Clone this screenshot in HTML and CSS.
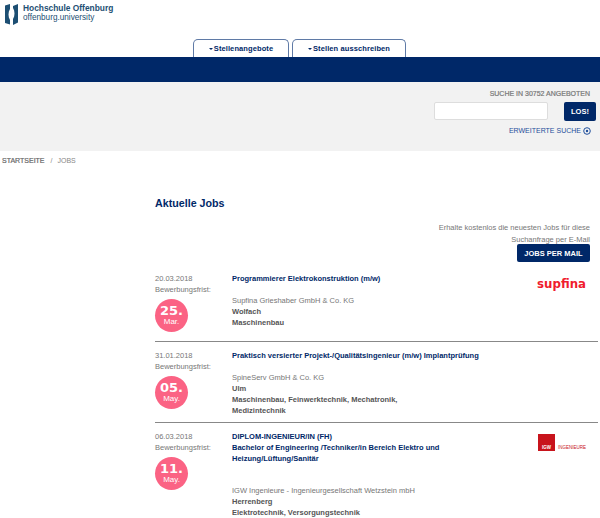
FILE: index.html
```html
<!DOCTYPE html>
<html lang="de">
<head>
<meta charset="utf-8">
<title>Jobs</title>
<link rel="stylesheet" href="styles.css">
</head>
<body>
<header class="top">
  <svg class="logo-mark" width="13" height="22" viewBox="0 0 13 22"><path fill="#1d4f73" d="M0 2.500 5 1V21.500L0 20ZM13 1V19.500L8 22V3Z"/><path fill="#fff" d="M5 6C3 9 3 14 5 17ZM8 5C10 8 10 13 8 16Z"/></svg>
  <div class="logo-text"><strong>Hochschule Offenburg</strong><span>offenburg.university</span></div>
</header>
<nav class="tabs">
  <a class="tab tab-a"><i class="caret"></i>Stellenangebote</a>
  <a class="tab tab-b"><i class="caret"></i>Stellen ausschreiben</a>
</nav>
<div class="band"></div>
<section class="search">
  <div class="search-title">SUCHE IN 30752 ANGEBOTEN</div>
  <div class="search-row"><input class="search-input" type="text"><button class="btn-los">LOS!</button></div>
  <a class="search-more">ERWEITERTE SUCHE <svg width="8" height="8" viewBox="0 0 8 8"><circle cx="4" cy="4" r="3.3" fill="none" stroke="#1f4f9c" stroke-width="1"/><circle cx="4" cy="4" r="1.200" fill="#1f4f9c"/></svg></a>
</section>
<div class="crumbs"><b>STARTSEITE</b><span class="sep">/</span><span>JOBS</span></div>
<main class="content">
  <h1>Aktuelle Jobs</h1>
  <div class="mail">
    <p>Erhalte kostenlos die neuesten Jobs für diese<br>Suchanfrage per E-Mail</p>
    <button class="btn-mail">JOBS PER MAIL</button>
  </div>
  <article class="job job-1">
    <div class="when">
      <div>20.03.2018</div><div>Bewerbungsfrist:</div>
      <div class="badge"><b>25.</b><span>Mar.</span></div>
    </div>
    <div class="info">
      <a class="title">Programmierer Elektrokonstruktion (m/w)</a>
      <div class="company">Supfina Grieshaber GmbH &amp; Co. KG</div>
      <div class="meta">Wolfach</div>
      <div class="meta">Maschinenbau</div>
    </div>
    <div class="brand"><span class="supfina">supfina</span></div>
  </article>
  <article class="job job-2">
    <div class="when">
      <div>31.01.2018</div><div>Bewerbungsfrist:</div>
      <div class="badge"><b>05.</b><span>May.</span></div>
    </div>
    <div class="info">
      <a class="title">Praktisch versierter Projekt-/Qualitätsingenieur (m/w) Implantprüfung</a>
      <div class="company">SpineServ GmbH &amp; Co. KG</div>
      <div class="meta">Ulm</div>
      <div class="meta">Maschinenbau, Feinwerktechnik, Mechatronik,<br>Medizintechnik</div>
    </div>
    <div class="brand"></div>
  </article>
  <article class="job job-3">
    <div class="when">
      <div>06.03.2018</div><div>Bewerbungsfrist:</div>
      <div class="badge"><b>11.</b><span>May.</span></div>
    </div>
    <div class="info">
      <a class="title">DIPLOM-INGENIEUR/IN (FH)<br>Bachelor of Engineering /Techniker/in Bereich Elektro und<br>Heizung/Lüftung/Sanitär</a>
      <div class="company tall">IGW Ingenieure - Ingenieurgesellschaft Wetzstein mbH</div>
      <div class="meta">Herrenberg</div>
      <div class="meta">Elektrotechnik, Versorgungstechnik</div>
    </div>
    <div class="brand"><div class="igw"><span class="igw-box">IGW</span><span class="igw-word">INGENIEURE</span></div></div>
  </article>
</main>
</body>
</html>
```
FILE: styles.css
```css
html, body { margin: 0; padding: 0; }
body { height: 518px; overflow: hidden; background: #fff; font-family: "Liberation Sans", Arial, sans-serif; font-size: 7.5px; line-height: 11px; color: #777; }
.top { display: flex; gap: 5px; height: 39px; padding: 3px 0 0 5px; box-sizing: border-box; align-items: flex-start; }
.logo-text { display: flex; flex-direction: column; color: #1d4f73; margin-top: 0; }
.logo-text strong { font-size: 8.4px; line-height: 10px; }
.logo-text span { font-size: 8.2px; line-height: 10px; }
.tabs { display: flex; gap: 3px; height: 18px; padding-left: 193px; }
.tab { display: flex; align-items: center; justify-content: center; box-sizing: border-box; height: 18px; background: #fff; border: 1px solid #5f7aa6; border-bottom: 0; border-radius: 5px 5px 0 0; color: #002868; font-weight: bold; font-size: 7.5px; letter-spacing: .1px; }
.tab-a { width: 96px; }
.tab-b { width: 114px; }
.caret { width: 0; height: 0; border: 2px solid transparent; border-top: 2px solid #002868; border-bottom: 0; margin-right: 1px; }
.band { height: 25px; background: #002868; }
.search { height: 69px; box-sizing: border-box; background: #f2f2f2; padding: 6px 4px 0 0; display: flex; flex-direction: column; align-items: flex-end; }
.search-title { font-size: 7px; color: #777; line-height: 11px; margin-right: 6px; -webkit-text-stroke: .2px #777; }
.search-row { display: flex; gap: 16px; margin-top: 3px; }
.search-input { width: 114px; height: 18px; box-sizing: border-box; border: 1px solid #ddd; border-radius: 2px; background: #fff; padding: 0; margin: 0; }
.btn-los { width: 32px; height: 19px; border: 0; border-radius: 2px; background: #002868; color: #fff; font: bold 7.5px "Liberation Sans", Arial, sans-serif; padding: 0; }
.search-more { margin-top: 4px; color: #1f4f9c; font-size: 7px; display: flex; align-items: center; gap: 2px; margin-right: 5px; }
.crumbs { height: 12px; margin-top: 4px; padding-left: 2px; font-size: 7px; line-height: 12px; color: #888; }
.crumbs b { color: #666; font-weight: normal; -webkit-text-stroke: .2px #666; }
.sep { margin: 0 5px 0 6px; }
.content { margin-left: 155px; margin-right: 2px; }
h1 { margin: 29px 0 0; font-size: 10.7px; line-height: 14px; color: #002868; }
.mail { margin: 12px 8px 0 0; text-align: right; }
.mail p { margin: 0; height: 22px; font-size: 7.5px; line-height: 12px; }
.btn-mail { display: block; margin: 0 0 0 auto; width: 73px; height: 18px; border: 0; border-radius: 2px; background: #002868; color: #fff; font: bold 7.5px "Liberation Sans", Arial, sans-serif; padding: 0; }
.job { display: flex; box-sizing: border-box; }
.job + .job { border-top: 1px solid #888; }
.job-1 { height: 70px; margin-top: 9px; padding-top: 2px; }
.job-2 { height: 81px; padding-top: 8px; }
.job-3 { padding-top: 8px; }
.when { width: 77px; flex: none; }
.badge { width: 33px; height: 33px; margin-top: 4px; border-radius: 50%; background: #fb6384; color: #fff; display: flex; flex-direction: column; align-items: center; justify-content: center; }
.badge b { font: bold 13px/12px "DejaVu Sans", sans-serif; }
.badge span { font-size: 8px; line-height: 9px; }
.info { width: 260px; flex: none; }
.title { display: block; color: #002868; font-weight: bold; font-size: 7.5px; line-height: 11px; }
.company { margin-top: 11px; line-height: 11px; }
.company.tall { margin-top: 21px; }
.meta { color: #555; font-weight: bold; font-size: 7.5px; line-height: 11px; }
.brand { flex: 1; display: flex; justify-content: flex-end; }
.supfina { color: #f01c2e; font: bold 11.8px/14px "DejaVu Sans", sans-serif; margin: 4px 12px 0 0; height: 14px; }
.igw { display: flex; align-items: flex-end; margin: 3px 12px 0 0; height: 17px; }
.igw-box { width: 17px; height: 17px; background: #c8141c; color: #fff; font: bold 4.5px/5px "Liberation Sans", sans-serif; display: flex; align-items: flex-end; justify-content: center; padding-bottom: 1px; box-sizing: border-box; }
.igw-word { color: #c8141c; font: 4.5px/5px "Liberation Sans", sans-serif; margin-left: 3px; margin-bottom: 1px; }
```
